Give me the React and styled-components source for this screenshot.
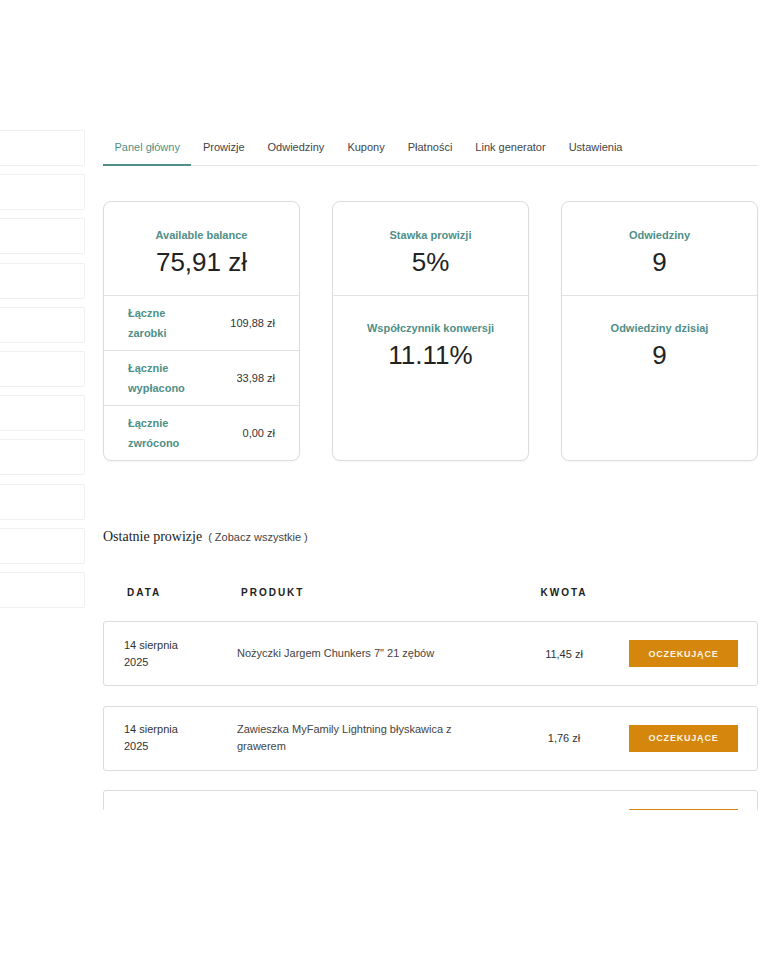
import React from "react";
import styled, { createGlobalStyle } from "styled-components";

const Global = createGlobalStyle`
  * { box-sizing: border-box; }
  html, body { margin: 0; padding: 0; background: #fff; }
  body { font-family: "Liberation Sans", Arial, sans-serif; color: #333; }
`;

const Page = styled.div`
  height: 810px;
  overflow: hidden;
  display: flex;
  align-items: flex-start;
  padding-top: 130px;
`;

const Sidebar = styled.div`
  width: 85px;
  flex: none;
  display: flex;
  flex-direction: column;
  gap: 8.2px;
`;

const SideItem = styled.div`
  height: 36px;
  border: 1px solid #efefef;
  border-left: none;
  border-radius: 0 2px 2px 0;
`;

const Main = styled.div`
  width: 655px;
  margin-left: 18px;
  flex: none;
`;

const Tabs = styled.nav`
  display: flex;
  border-bottom: 1px solid #e4e4e4;
  height: 36px;
`;

const Tab = styled.div`
  padding: 10px 11.5px 0;
  font-size: 11px;
  line-height: 14px;
  color: ${(p) => (p.$active ? "#4f8f88" : "#444")};
  border-bottom: 2px solid ${(p) => (p.$active ? "#4f8f88" : "transparent")};
  margin-bottom: -1px;
  white-space: nowrap;
`;

const Cards = styled.div`
  margin-top: 35px;
  display: grid;
  grid-template-columns: repeat(3, 1fr);
  gap: 32px;
`;

const Card = styled.div`
  border: 1px solid #dcdcdc;
  border-radius: 8px;
  background: #fff;
  display: flex;
  flex-direction: column;
  overflow: hidden;
  box-shadow: 0 1px 2px rgba(0, 0, 0, 0.04);
`;

const StatBlock = styled.div`
  text-align: center;
  padding: ${(p) => (p.$top ? "25px 12px 16px" : "24px 12px 16px")};
  border-bottom: ${(p) => (p.$top ? "1px solid #e2e2e2" : "none")};
`;

const StatLabel = styled.div`
  font-size: 11px;
  line-height: 16px;
  font-weight: bold;
  color: #4f8f88;
`;

const StatValue = styled.div`
  margin-top: 2px;
  font-size: 26px;
  line-height: 34px;
  color: #222;
`;

const SummaryRow = styled.div`
  height: 55px;
  display: flex;
  align-items: center;
  justify-content: space-between;
  padding: 0 24px;
  border-bottom: 1px solid #e2e2e2;
  &:last-child { border-bottom: none; height: 54px; }
`;

const SummaryLabel = styled.div`
  font-size: 11px;
  line-height: 20px;
  font-weight: bold;
  color: #4f8f88;
  width: 62px;
`;

const SummaryValue = styled.div`
  font-size: 11px;
  color: #333;
`;

const SectionHead = styled.div`
  margin-top: 67px;
  display: flex;
  align-items: baseline;
  gap: 6px;
  line-height: 18px;
`;

const SectionTitle = styled.span`
  font-family: "Liberation Serif", "Times New Roman", serif;
  font-size: 14px;
  color: #222;
`;

const SeeAll = styled.span`
  font-size: 11px;
  color: #444;
`;

const TableHead = styled.div`
  margin-top: 32px;
  height: 28px;
  display: grid;
  grid-template-columns: 114px 264px 118px 1fr;
  align-items: center;
  padding: 0 20px 0 24px;
`;

const HeadCell = styled.div`
  font-size: 10px;
  font-weight: bold;
  letter-spacing: 2px;
  color: #222;
  text-align: ${(p) => (p.$center ? "center" : "left")};
`;

const Rows = styled.div`
  margin-top: 15px;
  display: flex;
  flex-direction: column;
  gap: 19.5px;
`;

const Row = styled.div`
  height: 65px;
  border: 1px solid #dcdcdc;
  border-radius: 3px;
  display: grid;
  grid-template-columns: 113px 268px 118px 1fr;
  align-items: center;
  padding: 0 19px 0 20px;
  background: #fff;
`;

const DateCell = styled.div`
  font-size: 11px;
  line-height: 17px;
  color: #333;
  width: 70px;
`;

const ProductCell = styled.div`
  font-size: 11px;
  line-height: 17px;
  color: #444;
  max-width: 224px;
`;

const AmountCell = styled.div`
  font-size: 11px;
  color: #333;
  text-align: center;
`;

const Badge = styled.div`
  justify-self: end;
  width: 109px;
  height: 27px;
  background: #d4870c;
  color: #fff6e6;
  font-size: 9px;
  font-weight: bold;
  letter-spacing: 0.8px;
  display: flex;
  align-items: center;
  justify-content: center;
`;

const tabs = ["Panel główny", "Prowizje", "Odwiedziny", "Kupony", "Płatności", "Link generator", "Ustawienia"];

const summary = [
  ["Łączne zarobki", "109,88 zł"],
  ["Łącznie wypłacono", "33,98 zł"],
  ["Łącznie zwrócono", "0,00 zł"],
];

const commissions = [
  { date: "14 sierpnia 2025", product: "Nożyczki Jargem Chunkers 7\" 21 zębów", amount: "11,45 zł", status: "OCZEKUJĄCE" },
  { date: "14 sierpnia 2025", product: "Zawieszka MyFamily Lightning błyskawica z grawerem", amount: "1,76 zł", status: "OCZEKUJĄCE" },
  { date: "", product: "", amount: "", status: "" },
];

export default function App() {
  return (
    <>
      <Global />
      <Page>
        <Sidebar>
          {Array.from({ length: 11 }).map((_, i) => (
            <SideItem key={i} />
          ))}
        </Sidebar>
        <Main>
          <Tabs>
            {tabs.map((t, i) => (
              <Tab key={t} $active={i === 0}>{t}</Tab>
            ))}
          </Tabs>

          <Cards>
            <Card>
              <StatBlock $top>
                <StatLabel>Available balance</StatLabel>
                <StatValue>75,91 zł</StatValue>
              </StatBlock>
              {summary.map(([l, v]) => (
                <SummaryRow key={l}>
                  <SummaryLabel>{l}</SummaryLabel>
                  <SummaryValue>{v}</SummaryValue>
                </SummaryRow>
              ))}
            </Card>
            <Card>
              <StatBlock $top>
                <StatLabel>Stawka prowizji</StatLabel>
                <StatValue>5%</StatValue>
              </StatBlock>
              <StatBlock>
                <StatLabel>Współczynnik konwersji</StatLabel>
                <StatValue>11.11%</StatValue>
              </StatBlock>
            </Card>
            <Card>
              <StatBlock $top>
                <StatLabel>Odwiedziny</StatLabel>
                <StatValue>9</StatValue>
              </StatBlock>
              <StatBlock>
                <StatLabel>Odwiedziny dzisiaj</StatLabel>
                <StatValue>9</StatValue>
              </StatBlock>
            </Card>
          </Cards>

          <SectionHead>
            <SectionTitle>Ostatnie prowizje</SectionTitle>
            <SeeAll>( Zobacz wszystkie )</SeeAll>
          </SectionHead>

          <TableHead>
            <HeadCell>DATA</HeadCell>
            <HeadCell>PRODUKT</HeadCell>
            <HeadCell $center>KWOTA</HeadCell>
            <HeadCell />
          </TableHead>

          <Rows>
            {commissions.map((c, i) => (
              <Row key={i}>
                <DateCell>{c.date}</DateCell>
                <ProductCell>{c.product}</ProductCell>
                <AmountCell>{c.amount}</AmountCell>
                <Badge>{c.status}</Badge>
              </Row>
            ))}
          </Rows>
        </Main>
      </Page>
    </>
  );
}
